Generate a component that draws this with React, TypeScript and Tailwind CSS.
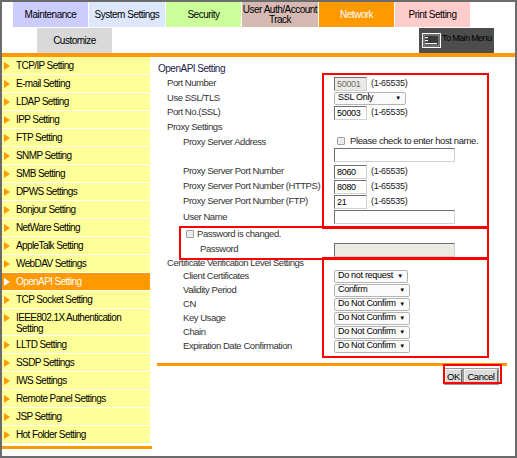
import React from 'react';

const menu = [
  'TCP/IP Setting',
  'E-mail Setting',
  'LDAP Setting',
  'IPP Setting',
  'FTP Setting',
  'SNMP Setting',
  'SMB Setting',
  'DPWS Settings',
  'Bonjour Setting',
  'NetWare Setting',
  'AppleTalk Setting',
  'WebDAV Settings',
  'OpenAPI Setting',
  'TCP Socket Setting',
  'IEEE802.1X Authentication|Setting',
  'LLTD Setting',
  'SSDP Settings',
  'IWS Settings',
  'Remote Panel Settings',
  'JSP Setting',
  'Hot Folder Setting',
];

const Arrow = ({ white }: { white?: boolean }) => (
  <svg width="6" height="8" viewBox="0 0 6 8" className="shrink-0">
    <polygon points="0,0 6,4 0,8" fill={white ? '#ffffff' : '#ff9900'} />
  </svg>
);

const TextBox = ({ w, value, disabled }: { w: string; value?: string; disabled?: boolean }) => (
  <div
    className={`h-[14px] ${w} border border-t-[#6f6f6f] border-l-[#6f6f6f] border-b-[#d0d0d0] border-r-[#d0d0d0] text-[9px] leading-[12px] pl-[2px] tracking-[-0.3px] ${
      disabled ? 'bg-[#ebebe4] text-[#6d6d6d]' : 'bg-white text-black'
    }`}
  >
    {value}
  </div>
);

const Select = ({ w, value }: { w: string; value: string }) => (
  <div
    className={`h-[13px] ${w} flex items-center justify-between border border-[#b4b4b4] rounded-[2px] bg-[#fafafa] pl-[3px] pr-[4px] text-[9px] text-black tracking-[-0.3px]`}
  >
    <span>{value}</span>
    <span className="text-[6px]">▼</span>
  </div>
);

const Check = () => (
  <div className="w-[8px] h-[8px] border border-[#a0a0a0] rounded-[1px] bg-[#ececec] shrink-0" />
);

const Range = () => <span className="text-[9px] text-[#222] tracking-[-0.3px]">(1-65535)</span>;

const Row = ({ hc, lc, label, children }: { hc: string; lc: string; label?: React.ReactNode; children?: React.ReactNode }) => (
  <div className={`flex items-center ${hc}`}>
    <div className={`w-[177px] shrink-0 text-[9.5px] text-[#333] tracking-[-0.45px] ${lc}`}>{label}</div>
    <div className="flex items-center gap-[4px]">{children}</div>
  </div>
);

export default function App() {
  return (
    <div className="relative w-[517px] h-[458px] border-2 border-[#6b6b6b] bg-white overflow-hidden font-['Liberation_Sans',Arial,sans-serif]">
      {/* top tabs */}
      <div className="flex gap-px pl-[11px] h-[25px] text-[10px] tracking-[-0.5px] text-black">
        <div className="w-[75px] bg-[#ccccff] flex items-center justify-center">Maintenance</div>
        <div className="w-[76px] bg-[#dde8ff] flex items-center justify-center">System Settings</div>
        <div className="w-[75px] bg-[#ccff99] flex items-center justify-center">Security</div>
        <div className="w-[76px] bg-[#d5b9b2] flex items-center justify-center text-center leading-[10px]">
          User Auth/Account
          <br />
          Track
        </div>
        <div className="w-[75px] bg-[#ff9900] flex items-center justify-center text-white">Network</div>
        <div className="w-[75px] bg-[#ffcccc] flex items-center justify-center">Print Setting</div>
      </div>
      <div className="flex h-[25px] mt-px">
        <div className="ml-[35px] w-[75px] bg-[#d9d9d9] flex items-center justify-center text-[10px] tracking-[-0.5px] text-black">
          Customize
        </div>
        <div className="ml-auto mr-[21px] w-[75px] bg-[#4d4d4d] flex items-start pl-[3px] pt-[4px] gap-[1px] overflow-hidden">
          <svg width="19" height="15" viewBox="0 0 19 15" className="mt-[1px] shrink-0">
            <rect x="0.5" y="0.5" width="18" height="14" fill="#3a3a3a" stroke="#ffffff" />
            <rect x="2" y="2" width="15" height="11" fill="none" stroke="#bdbdbd" strokeWidth="0.8" />
            <rect x="3" y="4" width="3" height="1.2" fill="#ffffff" />
            <rect x="3" y="7" width="3" height="1.2" fill="#ffffff" />
            <rect x="3" y="10" width="12" height="1.2" fill="#ffffff" />
          </svg>
          <span className="text-[9px] tracking-[-0.6px] text-black whitespace-nowrap">To Main Menu</span>
        </div>
      </div>
      <div className="h-[4px] bg-[#ff9900]" />

      <div className="flex">
        {/* side menu */}
        <div className="w-[150px] shrink-0 flex flex-col">
          {menu.map((item) => {
            const sel = item === 'OpenAPI Setting';
            const parts = item.split('|');
            return (
              <div
                key={item}
                className={`w-[148px] border-b border-white flex pl-[2px] text-[10px] tracking-[-0.6px] ${
                  parts.length > 1 ? 'h-[27px] items-start pt-[3px]' : 'h-[18px] items-center'
                } ${sel ? 'bg-[#ff9900] text-white' : 'bg-[#ffff99] text-black'}`}
              >
                <div className={parts.length > 1 ? 'mt-[2px]' : ''}>
                  <Arrow white={sel} />
                </div>
                <div className="ml-[6px] leading-[11px]">
                  {parts[0]}
                  {parts[1] && (
                    <>
                      <br />
                      {parts[1]}
                    </>
                  )}
                </div>
              </div>
            );
          })}
          <div className="mt-[2px] h-[3px] bg-[#ff9900]" />
        </div>

        {/* form */}
        <div className="ml-[5px] w-[350px] flex flex-col">
          <div className="mt-[6px] h-[12px] pl-[1px] text-[10px] leading-[12px] text-[#1a1a4d] tracking-[-0.5px]">OpenAPI Setting</div>
          <Row hc="h-[15px] mt-px" lc="pl-[10px]" label="Port Number">
            <TextBox w="w-[33px]" value="50001" disabled />
            <Range />
          </Row>
          <Row hc="h-[14px]" lc="pl-[10px]" label="Use SSL/TLS">
            <Select w="w-[72px]" value="SSL Only" />
          </Row>
          <Row hc="h-[15px]" lc="pl-[10px]" label="Port No.(SSL)">
            <TextBox w="w-[33px]" value="50003" />
            <Range />
          </Row>
          <Row hc="h-[14px]" lc="pl-[10px]" label="Proxy Settings" />
          <div className="flex h-[29px]">
            <div className="w-[177px] shrink-0 pl-[26px] pt-[1px] text-[9.5px] text-[#333] tracking-[-0.45px]">Proxy Server Address</div>
            <div className="flex flex-col">
              <div className="h-[14px] flex items-center pl-[3px] gap-[5px]">
                <Check />
                <span className="text-[9.5px] text-[#222] tracking-[-0.4px]">Please check to enter host name.</span>
              </div>
              <TextBox w="w-[121px]" />
            </div>
          </div>
          <Row hc="h-[16px] pt-[1px]" lc="pl-[26px]" label="Proxy Server Port Number">
            <TextBox w="w-[33px]" value="8060" />
            <Range />
          </Row>
          <Row hc="h-[15px]" lc="pl-[26px]" label="Proxy Server Port Number (HTTPS)">
            <TextBox w="w-[33px]" value="8080" />
            <Range />
          </Row>
          <Row hc="h-[15px]" lc="pl-[26px]" label="Proxy Server Port Number (FTP)">
            <TextBox w="w-[33px]" value="21" />
            <Range />
          </Row>
          <Row hc="h-[16px]" lc="pl-[26px]" label="User Name">
            <TextBox w="w-[121px]" />
          </Row>
          <Row
            hc="h-[16px] mt-px"
            lc="pl-[29px]"
            label={
              <span className="flex items-center gap-[3px]">
                <Check />
                Password is changed.
              </span>
            }
          />
          <Row hc="h-[15px]" lc="pl-[43px]" label="Password">
            <TextBox w="w-[121px]" disabled />
          </Row>
          <Row hc="h-[12px]" lc="pl-[10px] whitespace-nowrap" label="Certificate Verification Level Settings" />
          <Row hc="h-[14px]" lc="pl-[26px]" label="Client Certificates">
            <Select w="w-[74px]" value="Do not request" />
          </Row>
          <Row hc="h-[14px]" lc="pl-[26px]" label="Validity Period">
            <Select w="w-[76px]" value="Confirm" />
          </Row>
          <Row hc="h-[14px]" lc="pl-[26px]" label="CN">
            <Select w="w-[76px]" value="Do Not Confirm" />
          </Row>
          <Row hc="h-[14px]" lc="pl-[26px]" label="Key Usage">
            <Select w="w-[76px]" value="Do Not Confirm" />
          </Row>
          <Row hc="h-[14px]" lc="pl-[26px]" label="Chain">
            <Select w="w-[76px]" value="Do Not Confirm" />
          </Row>
          <Row hc="h-[14px]" lc="pl-[26px]" label="Expiration Date Confirmation">
            <Select w="w-[76px]" value="Do Not Confirm" />
          </Row>
          <div className="mt-[10px] h-[3px] bg-[#ff9900]" />
          <div className="flex justify-end gap-[2px] mt-[3px] mr-[9px]">
            <button className="h-[15px] w-[17px] bg-[#dcdcdc] border border-t-[#f4f4f4] border-l-[#f4f4f4] border-b-[#6a6a6a] border-r-[#6a6a6a] outline outline-1 outline-[#9a9a9a] text-[9.5px] leading-[12px] text-black tracking-[-0.4px]">
              OK
            </button>
            <button className="h-[15px] w-[34px] bg-[#dcdcdc] border border-t-[#f4f4f4] border-l-[#f4f4f4] border-b-[#6a6a6a] border-r-[#6a6a6a] outline outline-1 outline-[#9a9a9a] text-[9.5px] leading-[12px] text-black tracking-[-0.4px]">
              Cancel
            </button>
          </div>
        </div>
      </div>

      {/* red annotation boxes */}
      <div className="absolute left-[320px] top-[71px] w-[167px] h-[156px] border-2 border-[#ff0000]" />
      <div className="absolute left-[177px] top-[224px] w-[310px] h-[34px] border-2 border-[#ff0000]" />
      <div className="absolute left-[320px] top-[255px] w-[167px] h-[101px] border-2 border-[#ff0000]" />
      <div className="absolute left-[441px] top-[362px] w-[59px] h-[20px] border-2 border-[#ff0000]" />
    </div>
  );
}
